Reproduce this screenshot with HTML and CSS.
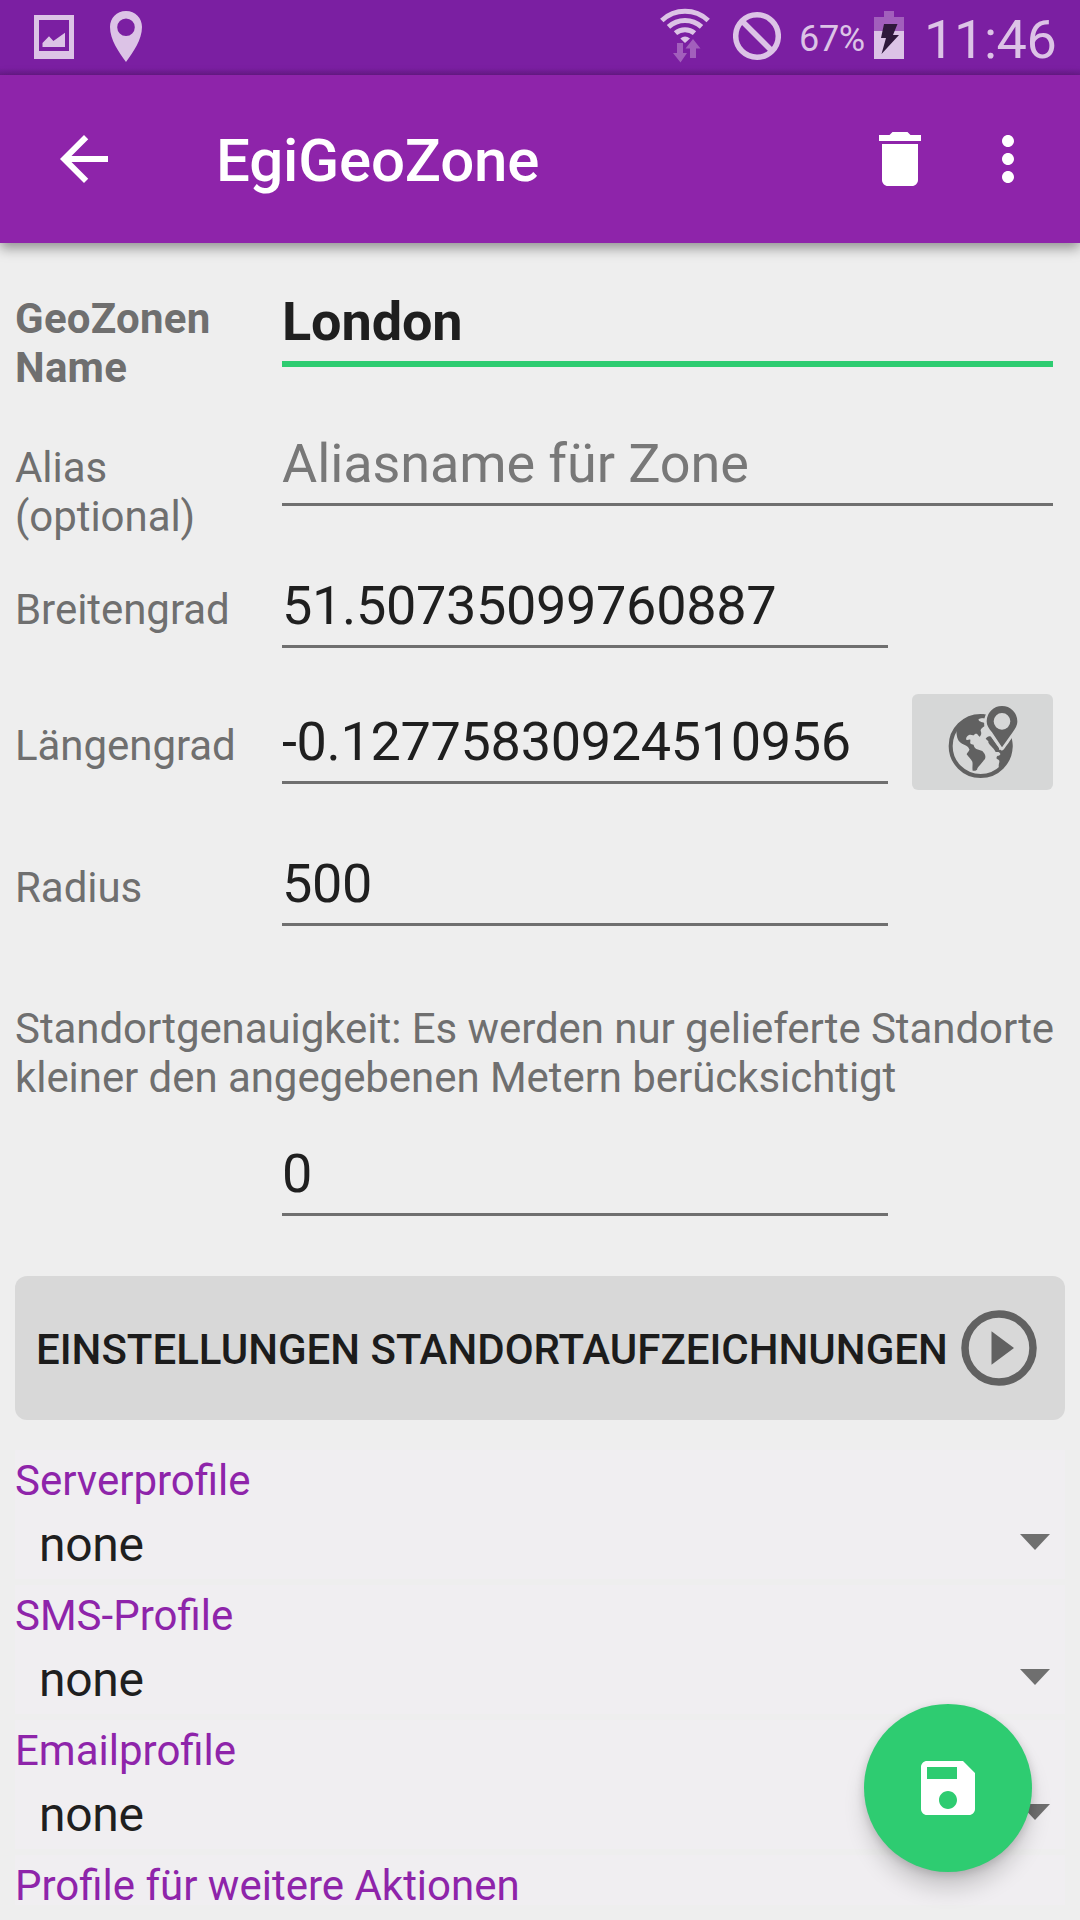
FILE: index.html
```html
<!DOCTYPE html>
<html lang="de">
<head>
  <meta charset="UTF-8">
  <meta name="viewport" content="width=device-width, initial-scale=1.0">
  <title>EgiGeoZone</title>
  <link rel="stylesheet" href="styles.css">
</head>
<body>
  <div class="statusbar">
    <svg class="status-left" width="160" height="75" viewBox="0 0 160 75">
      <path fill-rule="evenodd" d="M34 15h40v44H34zM39 20v31h30V20z"/>
      <path d="M42.500 43l6.500-6.700 4.400 4.700L65 32.700V47H42.500z"/>
      <path fill-rule="evenodd" d="M126 11c-9.500 0-16 7-16 16 0 13 9 25 16 35 7-10 16-22 16-35 0-9-6.500-16-16-16zm0 7.500a8.800 8.800 0 1 1 0 17.600 8.800 8.800 0 0 1 0-17.600z"/>
    </svg>
    <div class="status-right">
      <svg width="50" height="75" viewBox="660 0 50 75">
        <g class="wifi">
          <path d="M661.800 20.500a34 34 0 0 1 46.400 0"/>
          <path d="M668.500 26.800a24.500 24.500 0 0 1 33 0"/>
          <path d="M675.500 33.200a14.500 14.500 0 0 1 19 0"/>
        </g>
        <path d="M685 43l-4.700-4.500q4.700-4.200 9.700 0z"/>
        <path class="dim" d="M677 43h6v10h4l-6.500 9.500L673 53h4zM690 58V48.500h-4.500L693 39l7.500 9.500H696V58z"/>
      </svg>
      <svg class="blocked" width="48" height="75" viewBox="733 0 48 75">
        <circle cx="757" cy="36" r="21.300"/>
        <path d="M742 21l30 30"/>
      </svg>
      <span class="battery-text">67%</span>
      <svg class="battery" width="30" height="75" viewBox="874 0 30 75">
        <path class="dim" d="M884 11h10v6h10v14h-30V17h10z"/>
        <path d="M874 31h30v28h-30z"/>
        <path class="bolt" d="M884 24h13.500l-4.500 11h6l-17.500 19 4.500-16h-5z"/>
      </svg>
      <span class="clock">11:46</span>
    </div>
  </div>

  <header class="appbar">
    <svg class="back" width="72" height="72" viewBox="0 0 24 24">
      <path d="M20 11H7.830l5.590-5.590L12 4l-8 8 8 8 1.410-1.410L7.830 13H20v-2z"/>
    </svg>
    <h1>EgiGeoZone</h1>
    <svg class="delete" width="72" height="72" viewBox="0 0 24 24">
      <path d="M6 19c0 1.100.9 2 2 2h8c1.100 0 2-.9 2-2V7H6v12zM19 4h-3.500l-1-1h-5l-1 1H5v2h14V4z"/>
    </svg>
    <svg class="more" width="72" height="72" viewBox="0 0 24 24">
      <path d="M12 8c1.100 0 2-.9 2-2s-.9-2-2-2-2 .9-2 2 .9 2 2 2zm0 2c-1.100 0-2 .9-2 2s.9 2 2 2 2-.9 2-2-.9-2-2-2zm0 6c-1.100 0-2 .9-2 2s.9 2 2 2 2-.9 2-2-.9-2-2-2z"/>
    </svg>
  </header>

  <main class="form">
    <div class="row row-name">
      <label for="name">GeoZonen Name</label>
      <input id="name" class="wide" type="text" value="London">
    </div>
    <div class="row">
      <label for="alias">Alias (optional)</label>
      <input id="alias" class="wide" type="text" placeholder="Aliasname für Zone">
    </div>
    <div class="row row-lat">
      <label for="lat">Breitengrad</label>
      <input id="lat" type="text" value="51.50735099760887">
    </div>
    <div class="row">
      <label for="lng">Längengrad</label>
      <input id="lng" type="text" value="-0.12775830924510956">
      <button class="map-button" type="button" aria-label="Karte">
        <svg width="141" height="96" viewBox="156 102 423 288">
          <circle class="globe" cx="362" cy="258" r="90"/>
          <!-- Kontinente -->
          <path d="M283 212c12-26 40-46 89-49l2 9-18 5c-2 7 8 9 17 12v10c-6 5-12 8-11 14 3 6 2 12-3 17-6-3-4-9-12-9-4 0-3 5-8 5-4-1-7-3-12-1-7 4-10 10-8 14 4 3 8-2 12 0 1 5-2 9 1 12 4 3 7 1 9 4 1 4 2 8 8 12l18 6c5 6 12 12 8 24-6 7-12 14-15 18-3 5-8 7-9 14l-5 3h-8c-2-10 1-19-1-27-4-8-11-14-17-22 1-4 6-8 8-13 1-3-2-5-4-9-6-6-16-6-24-14-8-7-10-18-11-34z"/>
          <path d="M377 236c4-6 10-9 16-6l24 34 1 12-11 0c-4-8-8-12-14-18-5-5-9-9-8-14z"/>
          <path d="M456 240c5 34-8 66-38 84-5-8 1-15 0-22-3-5-11-4-8-10 2-7 9-3 11-9 1-6-8-5-6-12l9-3z"/>
          <path class="gap" d="M426 264l-32-46c-10-12-15-22-14-34a46 46 0 0 1 92 0c-1 13-6 24-15 36z"/>
          <path class="pin" fill-rule="evenodd" d="M426 262l-30-45c-10-12-16-20-16-33a46 46 0 0 1 92 0c0 13-6 22-14 33zm0-103a25 25 0 1 0 0 50 25 25 0 0 0 0-50z"/>
        </svg>
      </button>
    </div>
    <div class="row row-radius">
      <label for="radius">Radius</label>
      <input id="radius" type="text" value="500">
    </div>
    <p class="hint">Standortgenauigkeit: Es werden nur gelieferte Standorte kleiner den angegebenen Metern berücksichtigt</p>
    <div class="row row-accuracy">
      <span></span>
      <input id="accuracy" type="text" value="0">
    </div>

    <button class="settings-button" type="button">
      <span>EINSTELLUNGEN STANDORTAUFZEICHNUNGEN</span>
      <svg width="76" height="76" viewBox="0 0 76 76">
        <circle cx="38" cy="38" r="34"/>
        <path d="M30.500 21.300L53 38 30.500 54.700z"/>
      </svg>
    </button>

    <div class="profiles">
      <div class="profile">
        <div class="profile-title">Serverprofile</div>
        <div class="select">none<span class="arrow"></span></div>
      </div>
      <div class="profile">
        <div class="profile-title">SMS-Profile</div>
        <div class="select">none<span class="arrow"></span></div>
      </div>
      <div class="profile">
        <div class="profile-title">Emailprofile</div>
        <div class="select">none<span class="arrow"></span></div>
      </div>
      <div class="profile profile-last">
        <div class="profile-title">Profile für weitere Aktionen</div>
      </div>
    </div>
  </main>

  <button class="fab" type="button" aria-label="Speichern">
    <svg width="72" height="72" viewBox="0 0 24 24">
      <path d="M17 3H5c-1.110 0-2 .9-2 2v14c0 1.100.89 2 2 2h14c1.100 0 2-.9 2-2V7l-4-4zm-5 16c-1.660 0-3-1.340-3-3s1.340-3 3-3 3 1.340 3 3-1.340 3-3 3zm3-10H5V5h10v4z"/>
    </svg>
  </button>
</body>
</html>
```
FILE: styles.css
```css
* {
  box-sizing: border-box;
}
body {
  margin: 0;
  height: 1920px;
  overflow: hidden;
  font-family: Roboto, sans-serif;
  background-color: #eeeeee;
  color: #1f1f1f;
}
svg {
  display: block;
  flex-shrink: 0;
}
button {
  border: none;
  padding: 0;
  font-family: inherit;
  cursor: pointer;
}

/* Statusleiste */
.statusbar {
  height: 75px;
  display: flex;
  justify-content: space-between;
  background: linear-gradient(#7b1fa2 68px, #6a1b8b 75px);
  color: #dcc3e6;
  fill: #dcc3e6;
}
.status-right {
  display: flex;
  align-items: flex-start;
  padding-right: 23px;
}
.wifi {
  fill: none;
  stroke: #dcc3e6;
  stroke-width: 5;
}
.dim {
  fill: #a25fbc;
}
.blocked {
  margin-left: 23px;
  fill: none;
  stroke: #dcc3e6;
  stroke-width: 5.500;
}
.battery-text {
  width: 75px;
  margin-left: 18px;
  font-size: 36px;
  line-height: 42px;
  padding-top: 18px;
  letter-spacing: -0.3px;
}
.bolt {
  fill: #2f183b;
}
.clock {
  width: 133px;
  margin-left: 20px;
  font-size: 54px;
  line-height: 64px;
  padding-top: 8px;
  letter-spacing: -0.4px;
  white-space: nowrap;
}

/* Kopfzeile */
.appbar {
  position: relative;
  height: 168px;
  display: flex;
  align-items: center;
  padding: 0 36px 0 48px;
  background-color: #8e24aa;
  box-shadow: 0 5px 12px rgba(0, 0, 0, 0.4);
  fill: white;
}
.appbar h1 {
  flex: 1;
  margin: 4px 0 0 96px;
  color: white;
  font-size: 60px;
  font-weight: 500;
  line-height: 70px;
  letter-spacing: -0.15px;
}
.more {
  margin-left: 36px;
}

/* Formular */
.form {
  padding: 47px 15px 0;
}
.row {
  display: grid;
  grid-template-columns: 222px 606px 141px;
  column-gap: 24px;
  align-items: start;
  height: 142px;
}
.row label {
  padding-top: 11px;
  color: #6f6f6f;
  font-size: 42px;
  line-height: 49px;
  letter-spacing: -0.05px;
}
.row input {
  width: 100%;
  height: 74px;
  margin-left: 21px;
  padding: 0 0 8px;
  border: none;
  border-bottom: 3px solid #6f6f6f;
  outline: none;
  background: none;
  color: #1f1f1f;
  font-family: inherit;
  font-size: 54px;
  letter-spacing: -0.33px;
}
.row input.wide {
  grid-column: 2 / 4;
  letter-spacing: -0.1px;
}
.row input::placeholder {
  color: #787878;
}
.row-name label,
.row-name input {
  font-weight: 700;
}
.row-name label {
  padding-top: 4px;
  letter-spacing: 0.25px;
}
.row-name input {
  height: 77px;
  border-bottom: 6px solid #2ecc71;
}
.row-lat {
  height: 136px;
}
.row-radius {
  height: 152px;
}
.row-accuracy {
  height: 134px;
}
.map-button {
  width: 141px;
  height: 96px;
  margin: -16px 0 0 21px;
  border-radius: 6px;
  background-color: #d6d7d7;
  fill: #616161;
}
.globe {
  fill: none;
  stroke: #616161;
  stroke-width: 12;
}
.gap {
  fill: #d6d7d7;
  stroke: #d6d7d7;
  stroke-width: 14;
  stroke-linejoin: round;
}
.hint {
  margin: 0 0 40px;
  color: #6f6f6f;
  font-size: 42px;
  line-height: 49px;
  letter-spacing: -0.06px;
}
.settings-button {
  width: 100%;
  height: 144px;
  display: flex;
  align-items: center;
  justify-content: space-between;
  padding: 0 28px 0 21px;
  border-radius: 12px;
  background-color: #d8d8d8;
  color: #1c1c1c;
  font-size: 42px;
  font-weight: 500;
  white-space: nowrap;
}
.settings-button span {
  padding-top: 2px;
}
.settings-button svg {
  fill: #616161;
}
.settings-button circle {
  fill: none;
  stroke: #616161;
  stroke-width: 7.500;
}

/* Profile */
.profiles {
  display: flex;
  flex-direction: column;
  gap: 6px;
  margin-top: 30px;
}
.profile {
  height: 129px;
  padding-top: 6px;
  background-color: #f0eef1;
}
.profile-last {
  height: 50px;
}
/* fi-Ligatur bleibt nur ohne letter-spacing erhalten */
.profile-title {
  color: #8e24aa;
  font-size: 42px;
  line-height: 49px;
}
.select {
  display: flex;
  align-items: center;
  justify-content: space-between;
  margin-top: 11px;
  padding: 0 15px 0 24px;
  font-size: 48px;
  line-height: 57px;
  letter-spacing: -0.3px;
}
.arrow {
  margin-bottom: 5px;
  border: 15px solid transparent;
  border-top: 16px solid #6f6f6f;
  border-bottom: none;
}

.fab {
  position: absolute;
  right: 48px;
  bottom: 48px;
  width: 168px;
  height: 168px;
  display: flex;
  align-items: center;
  justify-content: center;
  border-radius: 50%;
  background-color: #2ecc71;
  box-shadow: 0 18px 24px -4px rgba(0, 0, 0, 0.2), 0 2px 10px rgba(0, 0, 0, 0.15);
  fill: white;
}
```
